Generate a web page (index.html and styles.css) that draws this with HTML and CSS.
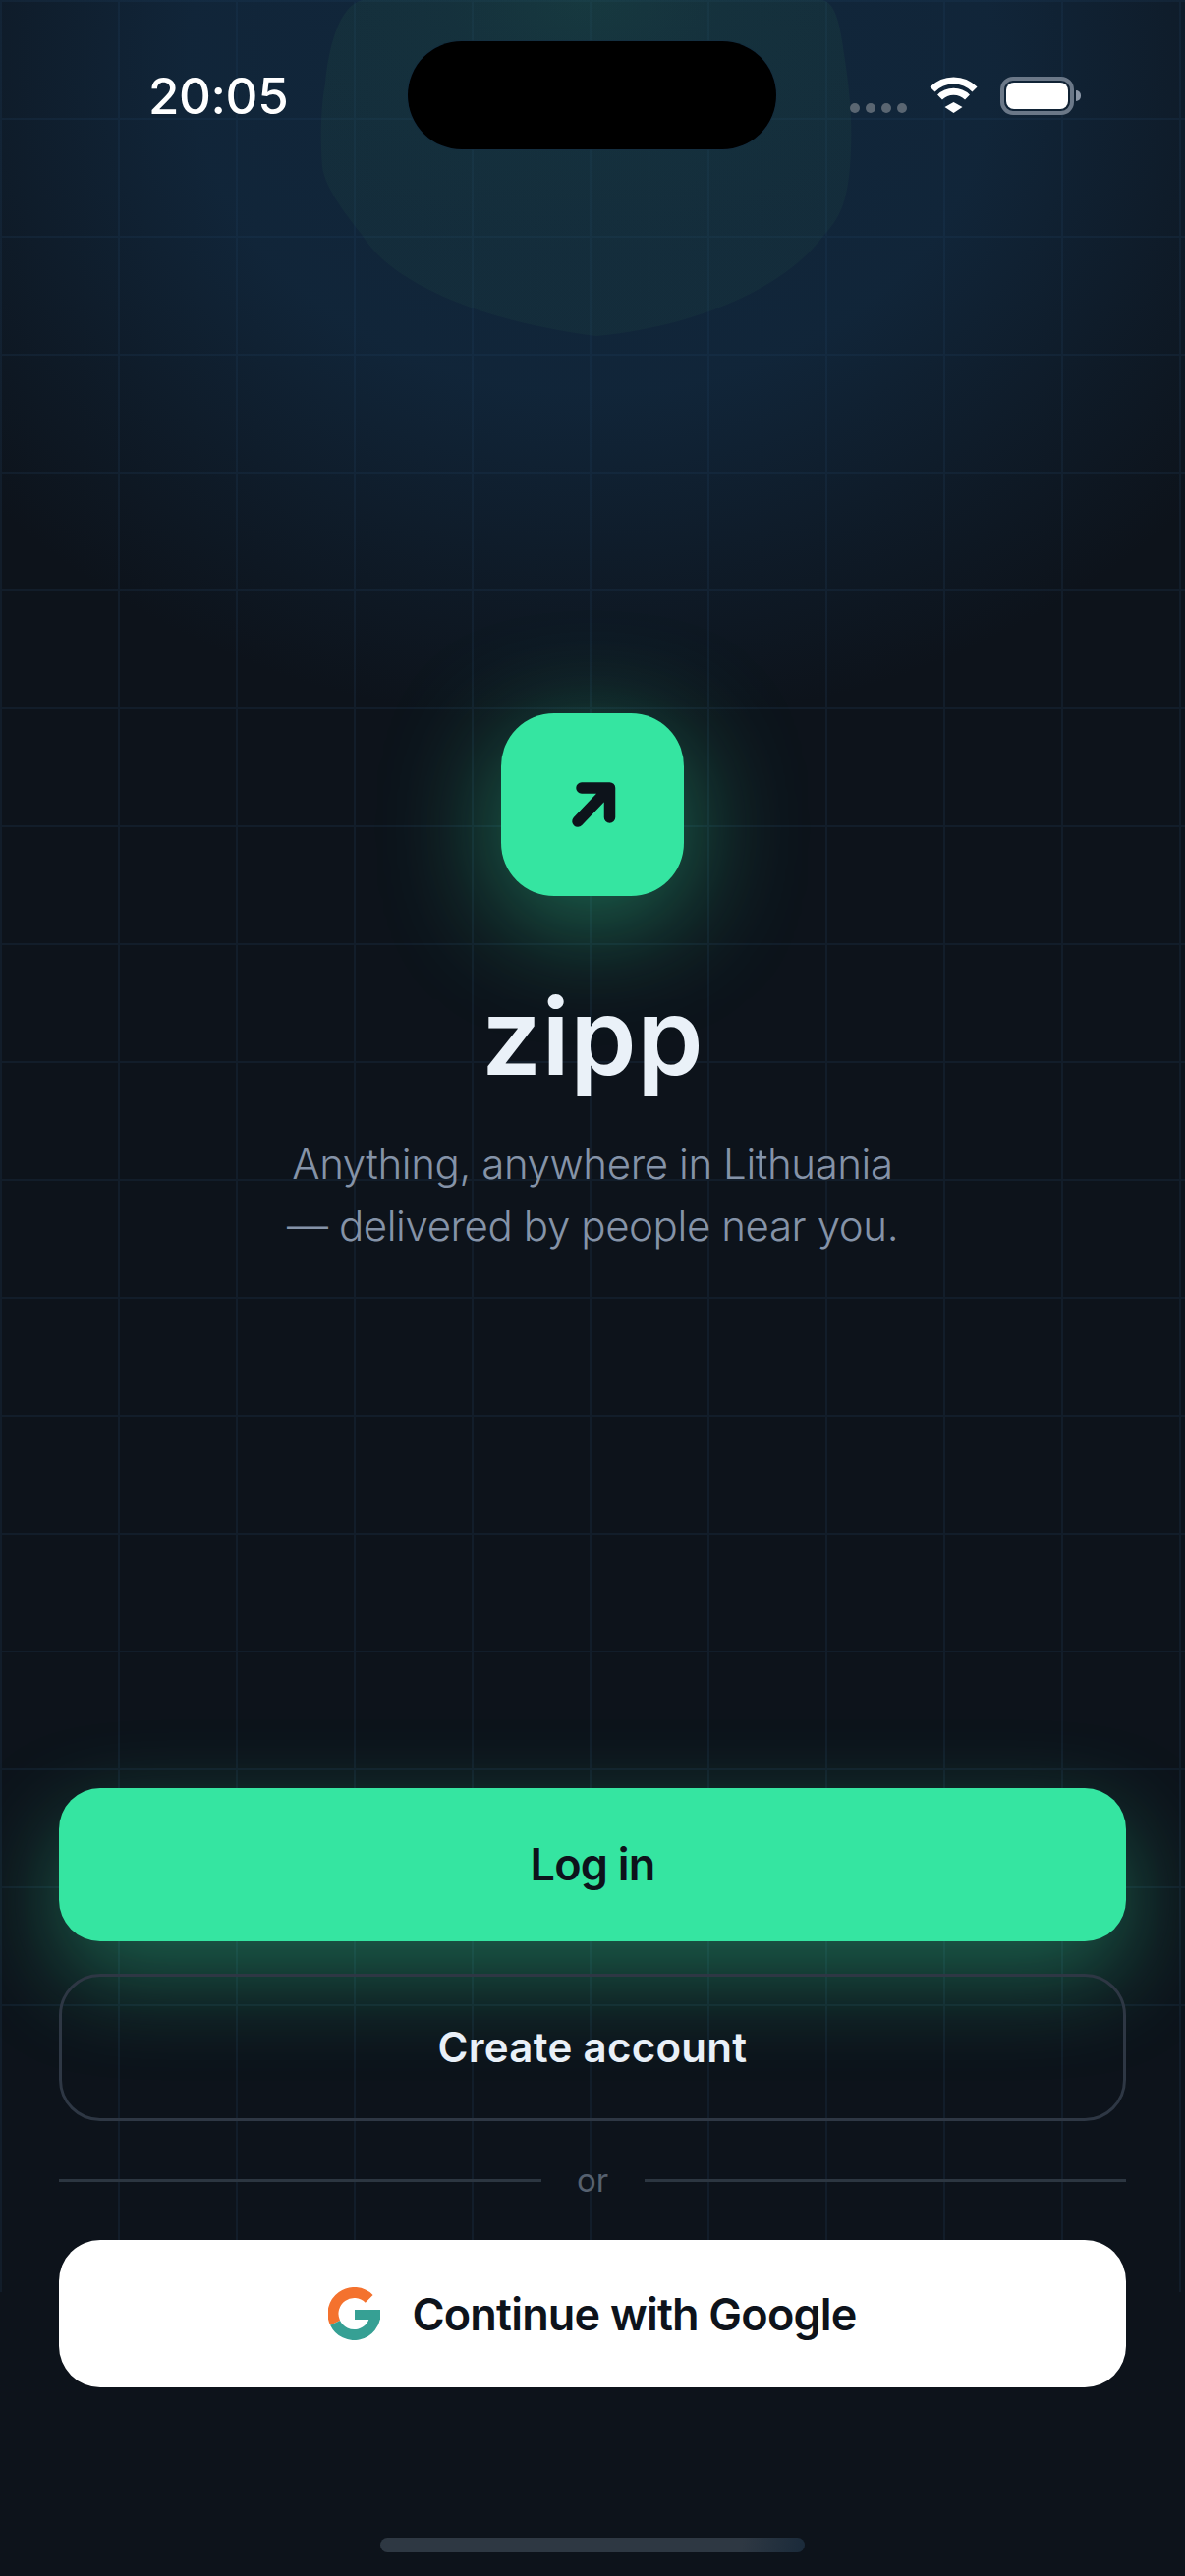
FILE: index.html
```html
<!DOCTYPE html>
<html lang="en">
<head>
<meta charset="utf-8">
<title>zipp</title>
<link rel="stylesheet" href="styles.css">
</head>
<body>
<div class="app">
  <div class="grid-v"></div>
  <div class="grid-h"></div>
  <div class="glow-blue"></div>
  <svg class="glow-green" viewBox="0 0 548 342" aria-hidden="true">
    <defs>
      <radialGradient id="gg" cx="50%" cy="0%" r="75%">
        <stop offset="0" stop-color="#3cb45a" stop-opacity=".13"/>
        <stop offset=".35" stop-color="#3ca050" stop-opacity=".09"/>
        <stop offset="1" stop-color="#3c8c50" stop-opacity=".07"/>
      </radialGradient>
    </defs>
    <path fill="url(#gg)" d="M44 0H510C525 0 530 25 534 55C541 100 543 130 540 170C537 205 530 222 513 240C480 285 400 330 282 342C170 328 75 290 44 240C22 212 6 190 3 170C0 130 3 100 6 85C9 50 20 5 44 0Z"/>
  </svg>
  <div class="island"></div>

  <header class="status">
    <span class="time">20:05</span>
    <div class="status-icons">
      <div class="dots"><i></i><i></i><i></i><i></i></div>
      <svg class="wifi" viewBox="0 0 51 37" aria-hidden="true">
        <path d="M4 13A30 30 0 0 1 47 13" fill="none" stroke="#fff" stroke-width="7"/>
        <path d="M11.5 21A20 20 0 0 1 39.5 21" fill="none" stroke="#fff" stroke-width="7"/>
        <path d="M16.500 31L25.500 26L34.500 31L25.500 37Z" fill="#fff"/>
      </svg>
      <div class="battery"><div class="battery-fill"></div><div class="battery-nub"></div></div>
    </div>
  </header>

  <main class="hero">
    <div class="logo">
      <svg class="arrow" viewBox="0 0 60 60" aria-hidden="true"><path d="M15 47L47.500 13M19 13H47.500V43" fill="none" stroke="#0d131b" stroke-width="11.500" stroke-linecap="round" stroke-linejoin="round"/></svg>
    </div>
    <h1 class="brand">zipp</h1>
    <p class="tagline">Anything, anywhere in Lithuania<br>— delivered by people near you.</p>
  </main>

  <section class="actions">
    <button class="btn btn-primary">Log in</button>
    <button class="btn btn-outline">Create account</button>
    <div class="divider"><span class="rule"></span><span class="or">or</span><span class="rule"></span></div>
    <button class="btn btn-google">
      <svg class="g-icon" viewBox="0 0 53 54" aria-hidden="true">
        <path d="M41.700 11.800A21.500 21.500 0 0 0 7.100 36.300" fill="none" stroke="#f4722e" stroke-width="11"/>
        <path d="M7.100 36.300A21.500 21.500 0 0 0 48 27" fill="none" stroke="#36a094" stroke-width="11"/>
        <rect x="27" y="23" width="26" height="10" fill="#36a094"/>
      </svg>
      <span>Continue with Google</span>
    </button>
  </section>
  <div class="home-bar"></div>
</div>
</body>
</html>
```
FILE: styles.css
```css
* { box-sizing: border-box; }
html, body { margin: 0; padding: 0; background: #0d131b; }
.app {
  position: relative;
  width: 1206px;
  height: 2622px;
  overflow: hidden;
  display: flex;
  flex-direction: column;
  background: #0d131b;
  font-family: Inter, "Noto Sans", sans-serif;
}
.grid-v, .grid-h { position: absolute; left: 0; top: 0; width: 100%; }
.grid-v {
  height: 2333px;
  background-image: linear-gradient(to right, #121d2a 2px, transparent 2px);
  background-size: 120px 120px;
}
.grid-h {
  height: 2043px;
  background-image: linear-gradient(to bottom, #121d2a 2px, transparent 2px);
  background-size: 120px 120px;
}
.glow-blue {
  position: absolute;
  left: 0; top: 0;
  width: 1206px; height: 780px;
  background: radial-gradient(ellipse 820px 680px at 50% 60px, rgba(22,62,98,.46) 0%, rgba(22,62,98,.42) 50%, rgba(22,62,98,.16) 80%, rgba(22,62,98,0) 100%);
}
.glow-green { position: absolute; left: 325px; top: 0; width: 548px; height: 342px; }
.island {
  position: absolute;
  left: 415px; top: 42px;
  width: 375px; height: 110px;
  border-radius: 55px;
  background: #000;
  box-shadow: 0 0 0 1px rgba(20,45,65,.7);
}
.status {
  position: relative;
  height: 160px;
  flex: none;
  display: flex;
  justify-content: space-between;
  align-items: flex-start;
  padding: 67px 113px 0 151px;
}
.time { font-size: 51px; line-height: 62px; font-weight: 500; letter-spacing: -.4px; color: #fff; }
.status-icons { display: flex; align-items: flex-start; padding-top: 11px; }
.dots { display: flex; gap: 6px; margin-top: 27px; margin-right: 22px; }
.dots i { display: block; width: 10px; height: 10px; border-radius: 50%; background: #5a6672; }
.wifi { width: 51px; height: 37px; display: block; margin-right: 22px; }
.battery {
  position: relative;
  width: 75px; height: 39px;
  border: 4px solid #6b7888;
  border-radius: 13px;
  padding: 2px;
}
.battery-fill { width: 100%; height: 100%; border-radius: 8px; background: #fff; }
.battery-nub {
  position: absolute;
  right: -11px; top: 10px;
  width: 5px; height: 11px;
  background: #8a95a5;
  border-radius: 0 5px 5px 0;
}
.hero {
  position: relative;
  display: flex;
  flex-direction: column;
  align-items: center;
  padding-top: 566px;
}
.logo {
  width: 186px; height: 186px;
  border-radius: 54px;
  background: #35e5a1;
  box-shadow: 0 24px 120px rgba(53,229,161,.48);
  display: flex; align-items: center; justify-content: center;
}
.arrow { width: 60px; height: 60px; display: block; }
.brand {
  margin: 78px 0 0;
  font-size: 108px;
  line-height: 130px;
  font-weight: 600;
  letter-spacing: .5px;
  color: #eaf1f8;
}
.tagline {
  margin: 33px 0 0;
  font-size: 42px;
  line-height: 63px;
  font-weight: 300;
  letter-spacing: -.4px;
  text-align: center;
  color: #8593a8;
}
.actions {
  position: relative;
  margin-top: auto;
  padding: 0 60px;
  display: flex;
  flex-direction: column;
}
.btn {
  display: flex;
  align-items: center;
  justify-content: center;
  width: 100%;
  border: 0;
  padding: 0;
  border-radius: 42px;
  font-family: inherit;
  font-weight: 600;
  font-size: 45px;
  letter-spacing: -.8px;
}
.btn-primary {
  height: 156px;
  padding-bottom: 2px;
  background: #35e5a1;
  color: #0d131b;
  box-shadow: 0 36px 96px rgba(53,229,161,.38);
}
.btn-outline {
  height: 150px;
  margin-top: 33px;
  padding-bottom: 2px;
  background: transparent;
  border: 3px solid #2e3744;
  color: #e9f0f8;
  font-size: 42px;
  letter-spacing: .3px;
}
.divider { display: flex; align-items: center; margin-top: 38px; height: 44px; }
.rule { flex: 1; height: 3px; background: #2c3641; }
.or { width: 105px; text-align: center; font-size: 33px; line-height: 44px; font-weight: 400; color: #56616f; }
.btn-google {
  height: 150px;
  margin-top: 39px;
  background: #fff;
  color: #0d131b;
  gap: 32px;
}
.g-icon { width: 53px; height: 54px; display: block; }
.home-bar {
  position: relative;
  flex: none;
  align-self: flex-start;
  margin: 153px 0 24px 387px;
  width: 432px; height: 15px;
  border-radius: 8px;
  background: linear-gradient(100deg, #2e3843 0%, #2e3843 85%, #1a2a3a 100%);
}
```
